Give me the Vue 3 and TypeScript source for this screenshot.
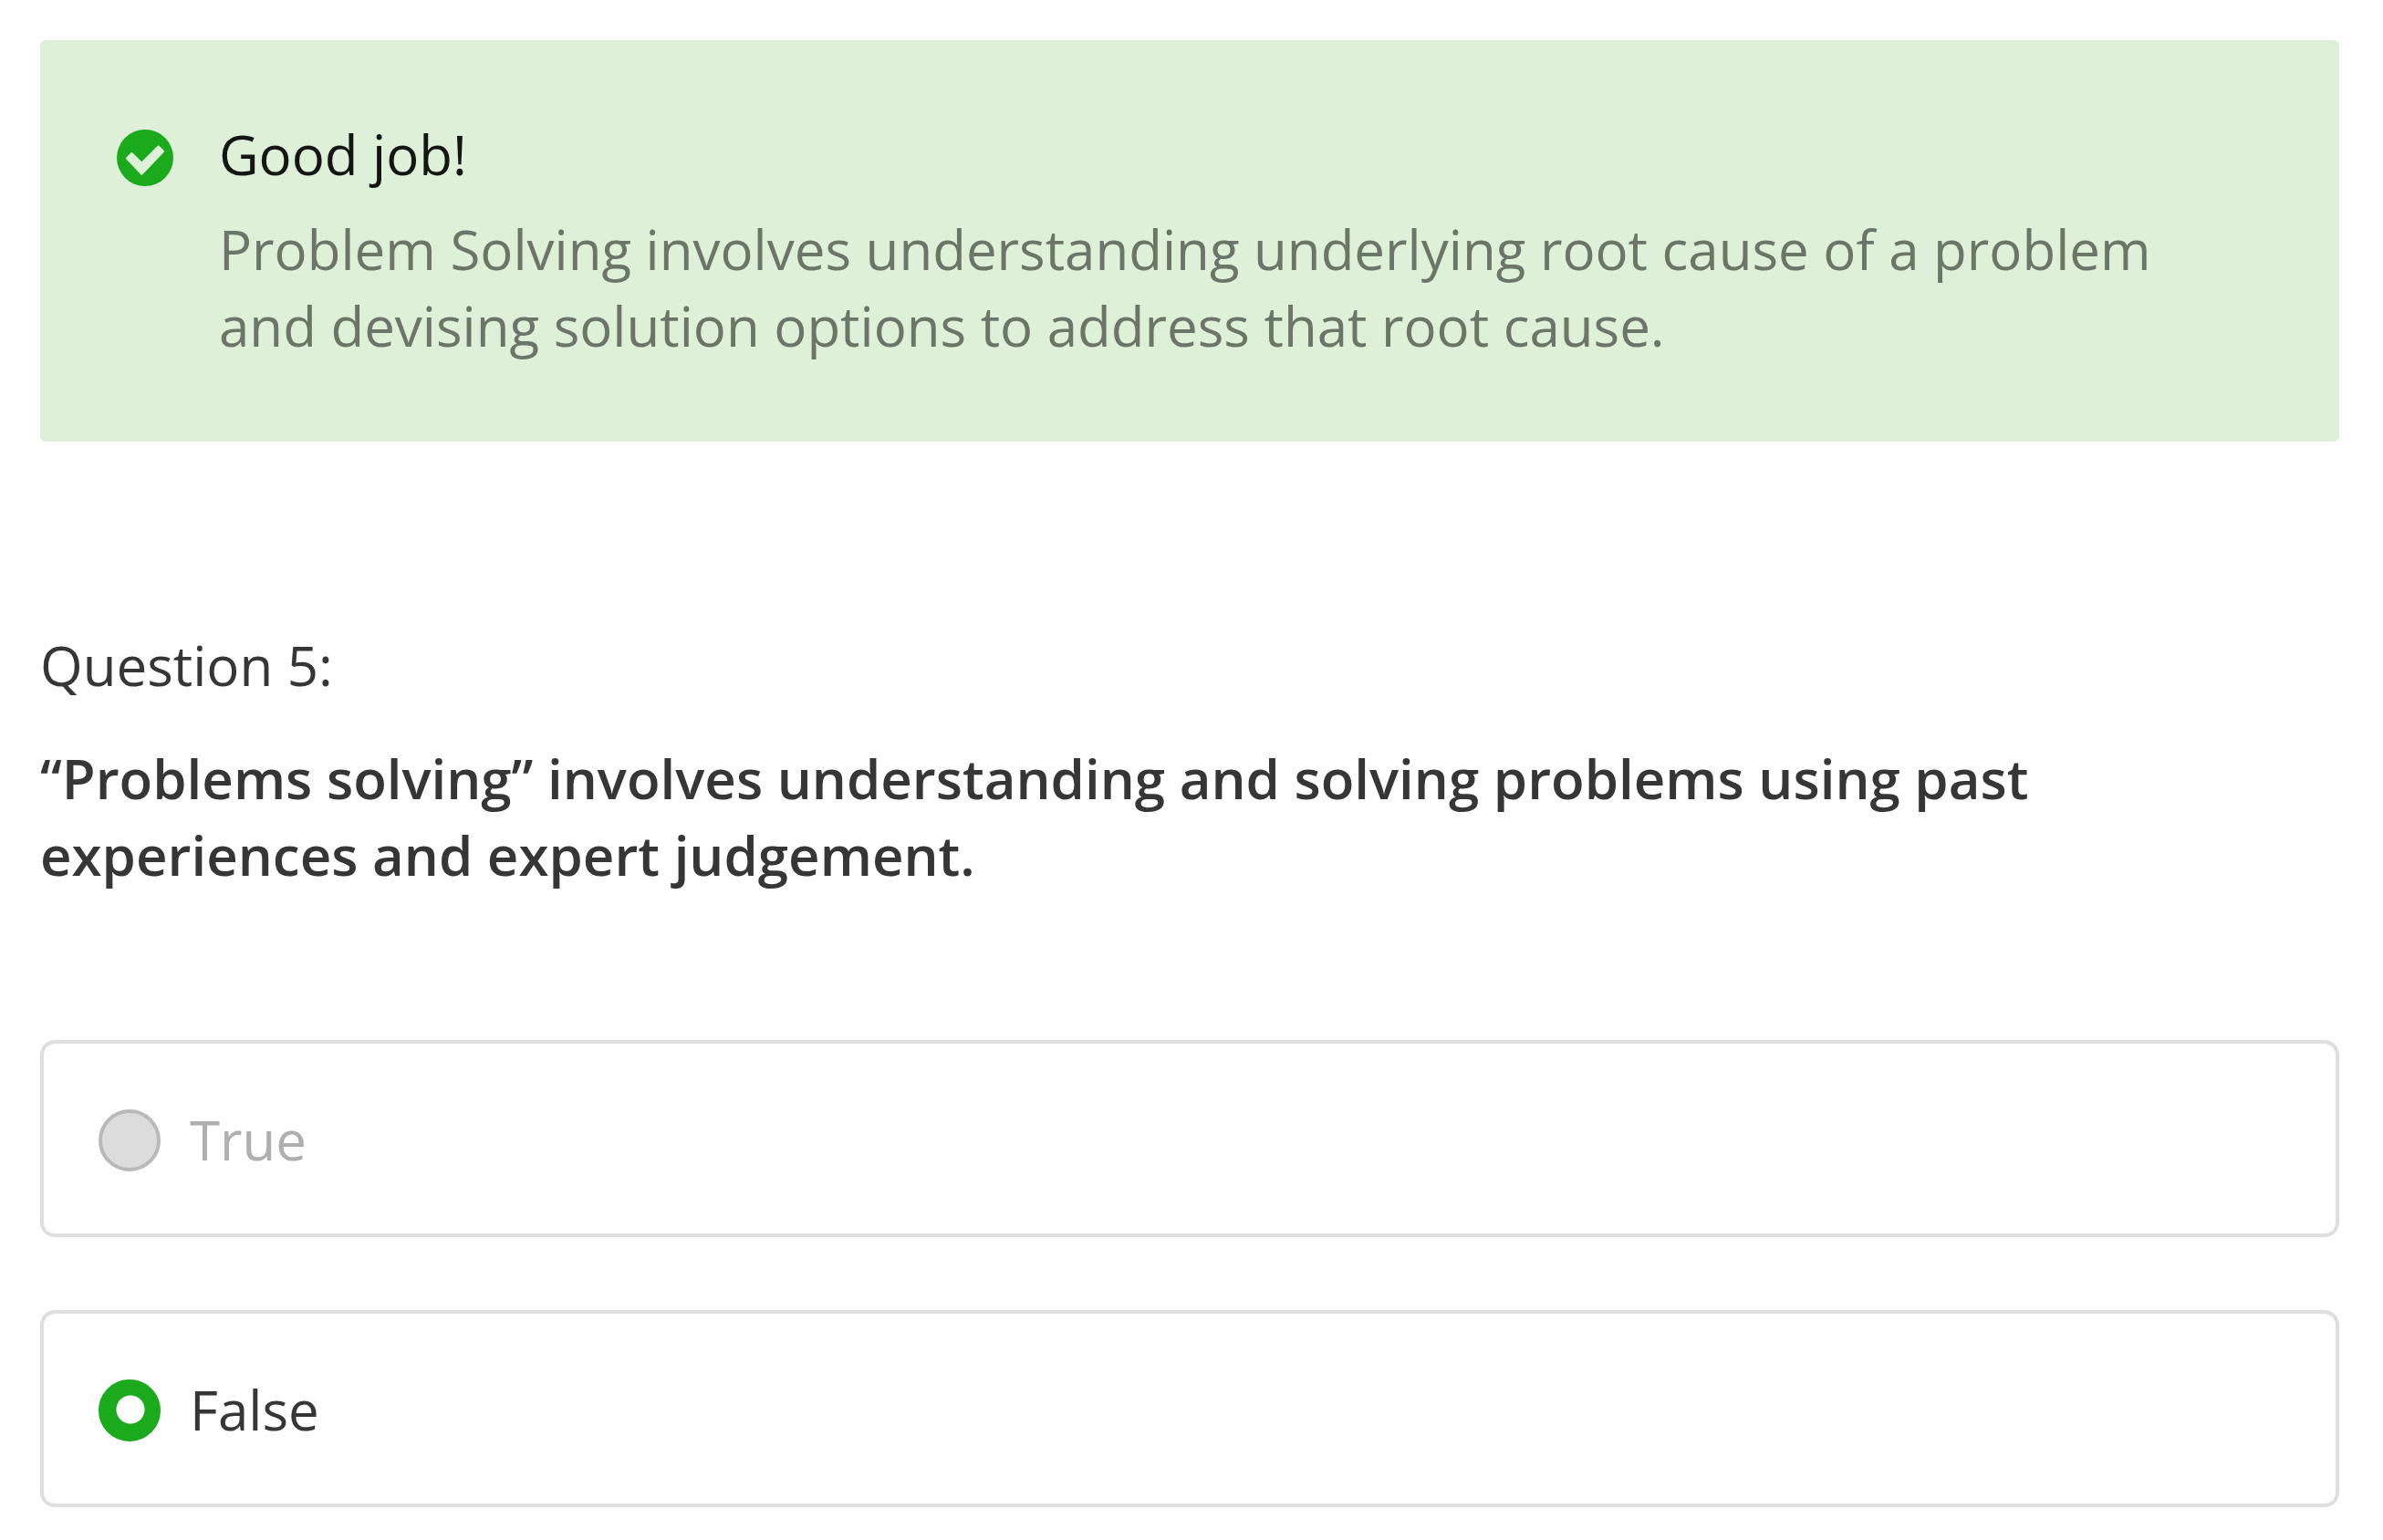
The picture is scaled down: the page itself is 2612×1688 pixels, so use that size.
<script setup lang="ts">
import { ref } from 'vue'

interface Answer {
  id: string
  label: string
  disabled: boolean
}

const answers: Answer[] = [
  { id: 'answer-true', label: 'True', disabled: true },
  { id: 'answer-false', label: 'False', disabled: false },
]

const selected = ref<string>('answer-false')
</script>

<template>
  <main class="quiz">
    <section class="alert" role="status">
      <svg class="alert-icon" viewBox="0 0 62 62" aria-hidden="true">
        <circle cx="31" cy="31" r="31" fill="#1aaa1c" />
        <path
          d="M11.5 31.5 16.3 26.7 27.3 37.4 45.6 19.1 50.4 23.9 27.3 48.2Z"
          fill="#def0d8"
          stroke="#def0d8"
          stroke-width="3"
          stroke-linejoin="round"
        />
      </svg>
      <div class="alert-body">
        <h2 class="alert-title">Good job!</h2>
        <p class="alert-text">
          Problem Solving involves understanding underlying root cause of a problem and devising
          solution options to address that root cause.
        </p>
      </div>
    </section>

    <section class="question">
      <p class="question-number">Question 5:</p>
      <h1 id="prompt" class="prompt">
        “Problems solving” involves understanding and solving problems using past experiences and
        expert judgement.
      </h1>
      <div class="answers" role="radiogroup" aria-labelledby="prompt">
        <label
          v-for="answer in answers"
          :key="answer.id"
          class="answer"
          :class="{ disabled: answer.disabled }"
          :for="answer.id"
        >
          <input
            :id="answer.id"
            v-model="selected"
            class="radio"
            type="radio"
            name="answer"
            :value="answer.id"
            :disabled="answer.disabled"
          />
          <span>{{ answer.label }}</span>
        </label>
      </div>
    </section>
  </main>
</template>

<style>
body {
  margin: 0;
  background: #fefefe;
}
</style>

<style scoped>
.quiz {
  padding: 44px 48px 36px 44px;
  color: #363636;
  font-family: 'Open Sans', sans-serif;
  font-size: 60px;
  line-height: 84px;
}

.alert {
  display: flex;
  align-items: flex-start;
  gap: 50px;
  padding: 83px 100px 85px 84px;
  border-radius: 6px;
  background: #def0d8;
}

.alert-icon {
  flex: none;
  width: 62px;
  height: 62px;
  margin-top: 15px;
}

.alert-body {
  flex: 1;
  min-width: 0;
}

.alert-title {
  margin: 0 0 20px;
  color: #141614;
  font-size: inherit;
  font-weight: 400;
}

.alert-text {
  margin: 0;
  color: #6b7568;
}

.question {
  margin-top: 203px;
}

.question-number {
  margin: 0 0 40px;
}

.prompt {
  margin: 0;
  font-size: inherit;
  font-weight: 600;
}

.answers {
  display: flex;
  flex-direction: column;
  gap: 80px;
  margin-top: 161px;
}

.answer {
  display: flex;
  align-items: center;
  gap: 32px;
  padding: 63px 60px 61px;
  border: 4px solid #dedede;
  border-radius: 16px;
}

.disabled {
  color: #afafaf;
}

.radio {
  flex: none;
  box-sizing: border-box;
  width: 68px;
  height: 68px;
  margin: 2px 0 0;
  border: 4px solid #b9b9b9;
  border-radius: 50%;
  background: #dcdcdc;
  appearance: none;
}

.radio:checked {
  border-color: #1aaa1c;
  background: radial-gradient(circle at 31px 29px, #fefefe 15px, #1aaa1c 16px);
}
</style>
